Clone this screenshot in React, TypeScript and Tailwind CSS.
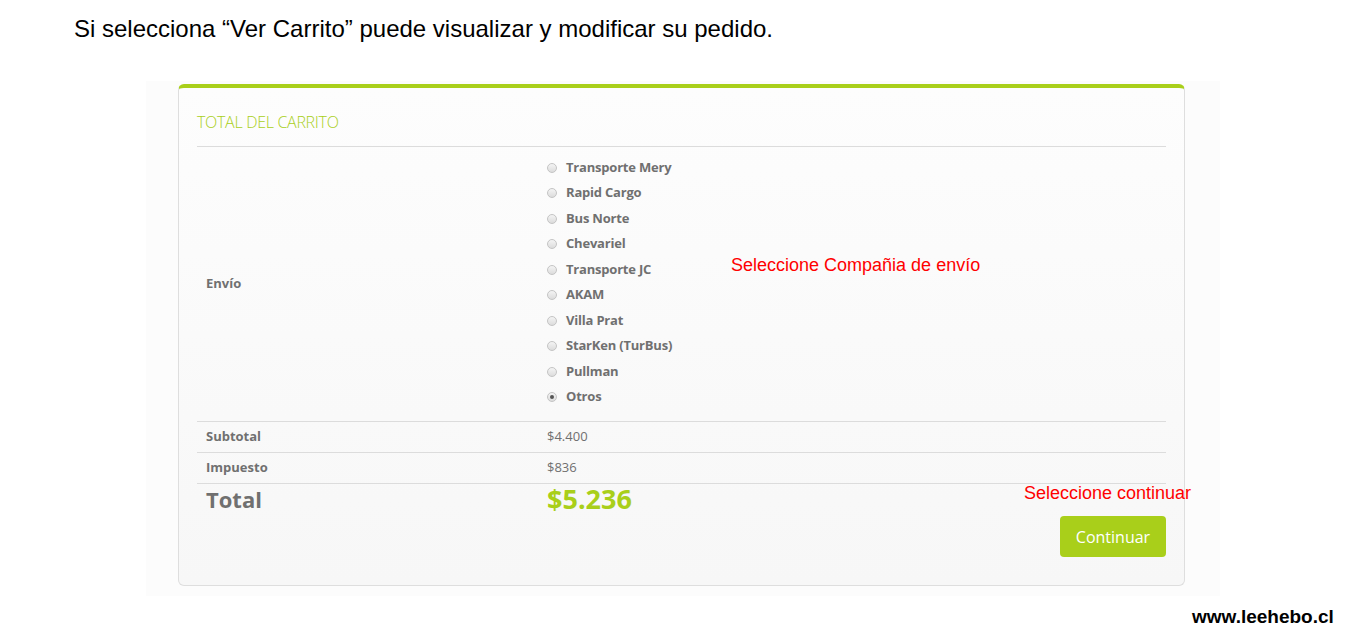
import React from 'react';

const carriers = [
  'Transporte Mery',
  'Rapid Cargo',
  'Bus Norte',
  'Chevariel',
  'Transporte JC',
  'AKAM',
  'Villa Prat',
  'StarKen (TurBus)',
  'Pullman',
  'Otros',
];

function Radio({ checked }: { checked?: boolean }) {
  return (
    <span className="w-[10px] h-[10px] rounded-full border border-[#c4c4c4] bg-gradient-to-b from-[#f4f4f4] to-[#dcdcdc] flex items-center justify-center shrink-0">
      {checked && <span className="w-[4px] h-[4px] rounded-full bg-[#555]" />}
    </span>
  );
}

export default function App() {
  return (
    <div className="relative w-[1349px] h-[640px] bg-white overflow-hidden font-['Liberation_Sans',Arial,sans-serif]">
      <p className="pt-[14px] pl-[74px] text-[24px] leading-[30px] text-black">
        Si selecciona “Ver Carrito” puede visualizar y modificar su pedido.
      </p>

      {/* faint screenshot backdrop */}
      <div className="mt-[37px] ml-[146px] w-[1074px] pt-[3px] pb-[10px] bg-[#fcfcfc]">
        <div className="ml-[32px] w-[1007px] rounded-[6px] border border-[#dedede] border-t-[4px] border-t-[#a9cf1a] bg-gradient-to-b from-[#fdfdfd] to-[#f7f7f7] px-[18px] pb-[28px] font-['Open_Sans',sans-serif] text-[#707070]">
          <h2 className="pt-[24px] pb-[14px] text-[16px] leading-[20px] font-light text-[#a9cf1a] tracking-[-0.3px] border-b border-[#dcdcdc]">
            TOTAL DEL CARRITO
          </h2>

          <div className="grid grid-cols-[341px_1fr] text-[13px]">
            {/* Envío */}
            <div className="flex items-center pl-[9px] font-bold border-b border-[#dcdcdc]">Envío</div>
            <div className="pl-[9px] pt-[8px] pb-[11px] border-b border-[#dcdcdc]">
              {carriers.map((c, i) => (
                <label key={c} className="flex items-center gap-[9px] h-[25.5px] font-bold tracking-[-0.2px]">
                  <Radio checked={i === carriers.length - 1} />
                  <span className="-mt-[1px]">{c}</span>
                </label>
              ))}
            </div>

            <div className="flex items-center h-[31px] pl-[9px] font-bold border-b border-[#dcdcdc]">Subtotal</div>
            <div className="flex items-center h-[31px] pl-[9px] border-b border-[#dcdcdc]">$4.400</div>

            <div className="flex items-center h-[31px] pl-[9px] font-bold border-b border-[#dcdcdc]">Impuesto</div>
            <div className="flex items-center h-[31px] pl-[9px] border-b border-[#dcdcdc]">$836</div>

            <div className="flex items-center h-[30px] pl-[9px] text-[22px] font-bold">Total</div>
            <div className="flex items-center h-[30px] pl-[9px] text-[27px] font-bold text-[#a9cf1a]">$5.236</div>
          </div>

          <div className="flex justify-end mt-[2px]">
            <button className="h-[41px] w-[106px] rounded-[4px] bg-[#a9cf1a] text-white text-[16px]">
              Continuar
            </button>
          </div>
        </div>
      </div>

      {/* annotations */}
      <span className="absolute left-[731px] top-[255px] text-[18px] leading-[20px] text-[#ff0000]">
        Seleccione Compañia de envío
      </span>
      <span className="absolute left-[1024px] top-[483px] text-[18px] leading-[20px] text-[#ff0000]">
        Seleccione continuar
      </span>
      <span className="absolute left-[1192px] top-[606px] text-[19px] leading-[22px] font-bold text-black">
        www.leehebo.cl
      </span>
    </div>
  );
}
